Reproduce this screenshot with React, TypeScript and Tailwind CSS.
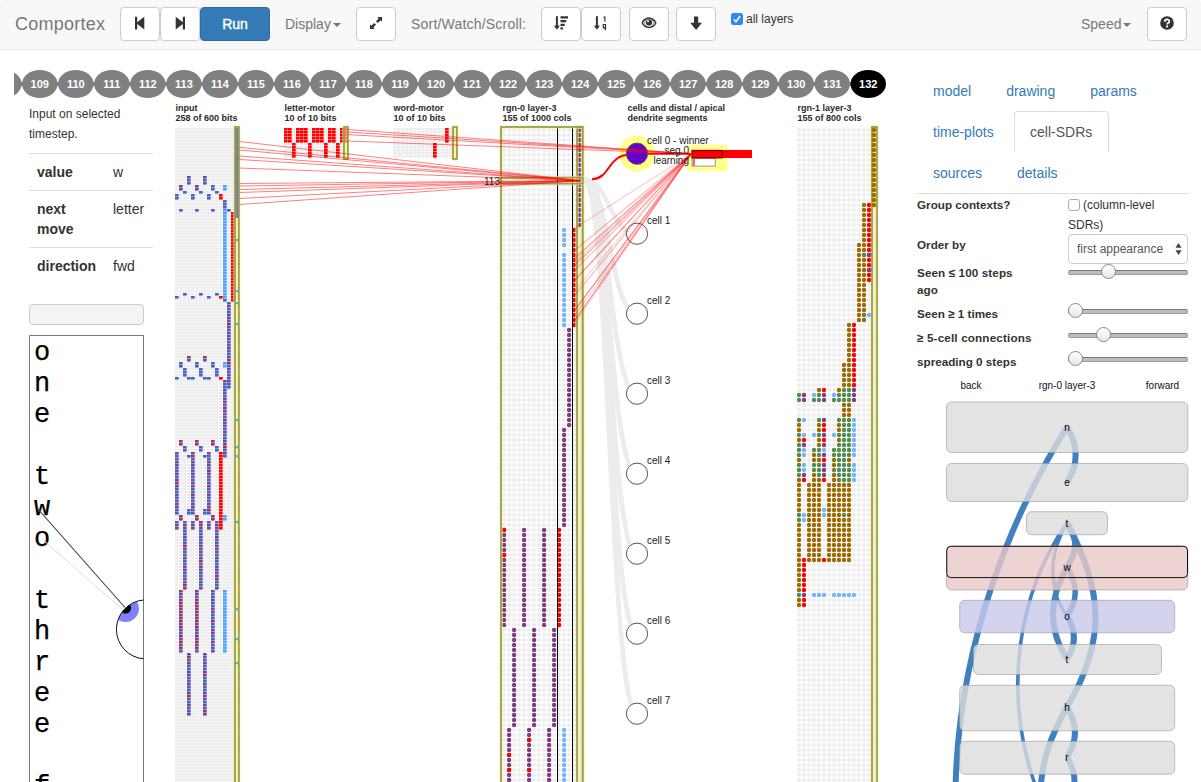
import React from "react";

const DOT = { P: "#823d80", B: "#a06a00", G: "#4f8e4f", L: "#77b5fb", R: "#ff0000" } as const;
const BIT = { r: "#ff0000", l: "#4da3ff", b: "#4a62c4", p: "#7a4598", m: "#a03068" } as const;
type DotKey = keyof typeof DOT;
type BitKey = keyof typeof BIT;

const range = (a: number, b: number) => Array.from({ length: b - a + 1 }, (_, i) => a + i);

/* ---------- input bits: [columns, first row, last row, colour] ---------- */
type Run = [number[], number, number, BitKey | "x"];
const inputRuns: Run[] = [
  [[3, 7], 16, 16, "p"], [[3, 7], 17, 18, "b"], [[1, 5], 19, 20, "p"], [[9], 19, 20, "b"], [[12], 19, 20, "l"],
  [[2, 6, 10], 21, 21, "b"], [[0, 4, 8], 22, 23, "b"], [[11], 22, 23, "r"],
  [[12], 24, 26, "b"], [[1, 5, 9, 13], 27, 27, "b"], [[12], 27, 56, "l"], [[12], 57, 57, "b"], [[14], 28, 57, "r"],
  [[2, 6, 10], 55, 55, "b"], [[0, 4, 8], 56, 56, "b"], [[11], 56, 56, "r"],
  [[13], 58, 86, "x"], [[12], 84, 109, "x"],
  [[3, 7], 76, 76, "m"], [[3, 7], 77, 77, "b"], [[1, 5, 9], 78, 79, "x"], [[12], 78, 79, "l"],
  [[2, 6, 10], 80, 82, "b"], [[0, 3, 4, 7, 8], 83, 83, "b"], [[11], 83, 83, "r"],
  [[1, 5, 9], 104, 105, "m"], [[2, 6, 10], 106, 107, "x"], [[0, 4, 8], 108, 128, "x"], [[11], 108, 133, "r"],
  [[3, 7], 109, 109, "b"], [[3, 7], 127, 128, "b"], [[1, 5, 9], 129, 130, "m"], [[12], 129, 130, "l"],
  [[0, 4, 8], 131, 133, "x"], [[2, 6, 10], 131, 153, "x"],
  [[1, 5], 154, 174, "m"], [[9], 154, 174, "x"], [[12], 154, 174, "l"], [[3, 7], 175, 195, "x"],
];

const shade = (k: BitKey | "x", row: number, col: number) => {
  if (k === "x") return (row * 7 + col) % 13 === 0 ? BIT.m : (row * 5) % 7 < 3 ? BIT.p : BIT.b;
  if (k === "m" && row > 153) return (row * 3) % 5 < 2 ? BIT.p : (row * 7) % 6 === 0 ? BIT.b : BIT.m;
  return BIT[k];
};

function Bits({ x, rows, id }: { x: number; rows: number; id: string }) {
  return (
    <>
      <pattern id={id} x={x} y={128} width={4} height={3} patternUnits="userSpaceOnUse">
        <rect width={3.5} height={2.5} fill="#ececec" />
      </pattern>
      <rect x={x} y={128} width={60} height={rows * 3} fill={`url(#${id})`} />
    </>
  );
}

function Bit({ x, c, r, fill }: { x: number; c: number; r: number; fill: string }) {
  return <rect x={x + c * 4} y={128 + r * 3} width={3.7} height={2.6} fill={fill} />;
}

function DotField({ x, id }: { x: number; id: string }) {
  return (
    <>
      <pattern id={id} x={x - 2.5} y={127.5} width={5} height={5} patternUnits="userSpaceOnUse">
        <circle cx={2.5} cy={2.5} r={2.05} fill="#ececec" />
      </pattern>
      <rect x={x - 2.5} y={127.5} width={80} height={660} fill={`url(#${id})`} />
    </>
  );
}

function Dot({ x, c, r, k }: { x: number; c: number; r: number; k: DotKey }) {
  return <circle cx={x + c * 5} cy={130 + r * 5} r={2.2} fill={DOT[k]} />;
}

/* ---------- rgn-0 columns ---------- */
type DotRun = [number[], number, number, DotKey];
const rgn0: DotRun[] = [
  [[15], 0, 19, "P"], [[12], 20, 23, "L"], [[12], 25, 39, "L"], [[14], 20, 39, "R"], [[13], 40, 59, "P"],
  [[12], 60, 79, "P"], [[0, 4, 8], 80, 99, "P"], [[0], 80, 80, "R"], [[0], 85, 85, "R"], [[11], 80, 99, "R"],
  [[2, 6, 10], 100, 119, "P"], [[1, 5, 9], 120, 131, "P"], [[12], 120, 131, "L"],
  [[1], 125, 125, "R"], [[1], 128, 128, "R"], [[5], 122, 122, "R"], [[5], 128, 128, "R"],
];

/* ---------- rgn-1 columns ---------- */
const rgn1: DotRun[] = [
  [[15], 0, 15, "B"], [[13], 15, 38, "B"], [[14], 15, 30, "R"], [[13], 25, 25, "G"], [[14], 25, 25, "P"],
  [[14], 28, 28, "P"], [[13], 37, 37, "G"], [[14], 37, 37, "L"], [[12], 23, 38, "B"],
  [[10], 39, 51, "B"], [[11], 39, 51, "R"], [[9], 47, 51, "B"],
];
const rgn1Rows = [
  "....BR..BGGP", "GP.LGP.LGGGP", "GP.GGP.GGGGP", ".........BB.", ".........BB.", ".........BB.",
  "GL..GP..GGGL", "B...BR..BGGL", "B...BR..BGGL", "GL.LGP.LGGGL", "BR..BR..BGGL", "GP..BP..GGGL",
  "GL.GGL.GGGGL", "GL.BGP.GGGGL", "B..BBR.BGGB.", "GL.GGP.BGGGL", "GL.GGP.GGGGL", "GP.BGP.BGGGL", "BR.BBR.BGGGL",
  "B.BBB.BBBBB.", "B.BBB.BBBBB.", "B.BBB.BBBBB.", "B.BBB.BBBBB.", "B.BBB.BBBBB.", "B.BBBLBBBBB.",
  "GLBBBLBBBGB.", "GLBBB.BBBBB.", "B.BBB.BBBBB.", "B.BBB.BBBBB.", "B.BBB.BBBBB.", "B.BBB.BBBBB.",
  "B.BBB.BBBBB.", "B.BBB.BBBBB.", "B.BBB.BBBBB.", "BRBBBRBBBBB.",
  "BR..........", "BR..........", "BR..........", "BR..........", "BR..........", "BR..........",
  "GP.LLL.LLLLL", "BR..........", "BR..........",
];

function Highlight({ x, y = 127, w, h }: { x: number; y?: number; w: number; h: number }) {
  return (
    <>
      <rect x={x} y={y} width={w} height={h} fill="none" stroke="#f4f4a0" strokeOpacity={0.6} strokeWidth={3.6} />
      <rect x={x} y={y} width={w} height={h} fill="none" stroke="#92923f" strokeOpacity={0.88} strokeWidth={1.8} />
    </>
  );
}

const headings: [number, string, string][] = [
  [175.5, "input", "258 of 600 bits"],
  [284.5, "letter-motor", "10 of 10 bits"],
  [393.5, "word-motor", "10 of 10 bits"],
  [502.5, "rgn-0 layer-3", "155 of 1000 cols"],
  [627.5, "cells and distal / apical", "dendrite segments"],
  [797.5, "rgn-1 layer-3", "155 of 800 cols"],
];

function Viz() {
  return (
    <svg className="block h-[682px] w-[740px] shrink-0" viewBox="160 100 740 682" fontFamily="'Liberation Sans', Arial, sans-serif">
      {headings.map(([x, a, b]) => (
        <g key={x} fontSize={9} fontWeight={700} fill="#2a2a2a">
          <text x={x} y={111}>{a}</text>
          <text x={x} y={121}>{b}</text>
        </g>
      ))}

      <Bits x={175} rows={220} id="bits-input" />
      {inputRuns.flatMap(([cols, a, b, k], i) =>
        cols.flatMap((c) => range(a, b).map((r) => <Bit key={`${i}-${c}-${r}`} x={175} c={c} r={r} fill={shade(k, r, c)} />))
      )}
      <rect x={235} y={127} width={4} height={660} fill="#f3f3c2" />
      <Highlight x={235} w={3.9} h={670} />
      <rect x={235.5} y={128} width={3} height={90} fill="#8c8c80" />
      {range(0, 29).map((r) => <rect key={r} x={235.6} y={128.4 + r * 3} width={2.8} height={2} fill="#74859a" />)}
      {[240, 291, 303, 324, 420, 447, 456, 522, 609, 639, 663].map((y) => (
        <rect key={y} x={235.2} y={y - 1} width={3.6} height={2.3} fill="#62b3ae" />
      ))}

      <Bits x={284} rows={10} id="bits-letter" />
      {[0, 1, 3, 4, 5, 7, 8, 9, 11, 12, 14, 15].flatMap((c) => range(0, 4).map((r) => <Bit key={`${c}-${r}`} x={284} c={c} r={r} fill="#f00" />))}
      {[2, 6, 10, 13].flatMap((c) => range(5, 9).map((r) => <Bit key={`${c}-${r}`} x={284} c={c} r={r} fill="#f00" />))}
      <rect x={344} y={143} width={4} height={16} fill="#f3f3c2" />
      <Highlight x={344} w={3.9} h={32} />

      <Bits x={393} rows={10} id="bits-word" />
      {range(0, 4).map((r) => <Bit key={r} x={393} c={13} r={r} fill="#f00" />)}
      {range(5, 9).map((r) => <Bit key={r} x={393} c={10} r={r} fill="#f00" />)}
      <rect x={453} y={127} width={4} height={32} fill="#f3f3c2" />
      <Highlight x={453} w={3.9} h={32} />

      <DotField x={504} id="dots-a" />
      <rect x={577} y={127} width={6} height={660} fill="#f3f3c2" />
      {range(0, 131).map((r) => <circle key={r} cx={579.3} cy={130 + r * 5} r={1.9} fill="#ececdf" />)}
      {rgn0.flatMap(([cols, a, b, k], i) =>
        cols.flatMap((c) => range(a, b).map((r) => <Dot key={`${i}-${c}-${r}`} x={504.1} c={c} r={r} k={k} />))
      )}
      <path d="M557.5 127V782M572.5 127V782" stroke="#000" strokeWidth={1} />
      <Highlight x={577} w={5.7} h={670} />
      <Highlight x={501} w={81.7} h={670} />
      <Highlight x={501} y={177.6} w={81.7} h={6} />

      <DotField x={799} id="dots-b" />
      <rect x={872} y={127} width={5} height={660} fill="#f3f3c2" />
      <Highlight x={872} w={5} h={670} />
      {rgn1.flatMap(([cols, a, b, k], i) =>
        cols.flatMap((c) => range(a, b).map((r) => <Dot key={`${i}-${c}-${r}`} x={799} c={c} r={r} k={k} />))
      )}
      {rgn1Rows.flatMap((line, i) =>
        line.split("").map((ch, c) => (ch === "." ? null : <Dot key={`${i}-${c}`} x={799} c={c} r={52 + i} k={ch as DotKey} />))
      )}
      {range(16, 131).map((r) => <circle key={r} cx={874.5} cy={130 + r * 5} r={1.6} fill="#ececdf" />)}

      {range(1, 7).map((k) => (
        <path key={k} d={`M584 180C609.5 180 609.5 ${153.7 + 80 * k} 637 ${153.7 + 80 * k}`} fill="none" stroke="#ececec" strokeWidth={4.8} />
      ))}
      <circle cx={637} cy={153.7} r={18} fill="#ffff8c" />
      <path d="M592 179.3C611 178 607 155.5 630 154.5" fill="none" stroke="#f00" strokeWidth={2} />
      <rect x={687} y={145} width={40.3} height={26.3} fill="#ffff8c" />
      {range(0, 7).map((k) => (
        <circle key={k} cx={637} cy={153.7 + 80 * k} r={10.6} fill={k === 0 ? "#6600cc" : "#fff"} stroke="#555" strokeWidth={1} />
      ))}
      <path d="M648 153.7H690" stroke="#f00" strokeWidth={2} />
      <rect x={722} y={150} width={30} height={8} fill="#f00" />
      <rect x={692} y={158.5} width={23.3} height={7.6} fill="#fff" stroke="#999" />
      <rect x={692.5} y={159} width={2.5} height={7} fill="#e57373" />
      <rect x={692} y={150.5} width={30.3} height={7.3} fill="#f00" stroke="#8a0000" strokeWidth={1.3} />

      <g stroke="#f00" fill="none">
        {[141.5, 147.3, 150, 156, 159.5, 168, 183.5, 186, 189.5, 192.5, 198.5, 204.5].map((y) => (
          <path key={y} d={`M239.5 ${y}L580 180.7`} strokeOpacity={0.5} strokeWidth={1} />
        ))}
        {[129.5, 132, 134.6, 141].map((y) => (
          <path key={y} d={`M347.5 ${y}L691 153.7`} strokeOpacity={0.5} strokeWidth={1} />
        ))}
        {([[228, 0.2], [250, 0.28], [258, 0.42], [262, 0.22], [265, 0.36], [270, 0.28], [280, 0.5], [290, 0.2], [295, 0.3], [310, 0.55], [315, 0.22], [320, 0.5], [323, 0.22]] as const).map(([y, o]) => (
          <path key={y} d={`M575 ${y}L691 154`} strokeOpacity={o} strokeWidth={1.1} />
        ))}
      </g>

      <g fontSize={10} fill="#222">
        <text x={647} y={144}>cell 0 - winner</text>
        {range(1, 7).map((k) => <text key={k} x={647} y={144 + 80 * k}>cell {k}</text>)}
        <text x={689} y={154} textAnchor="end">seg 0</text>
        <text x={689} y={164} textAnchor="end">learning</text>
        <text x={500} y={184.5} textAnchor="end">113</text>
      </g>
    </svg>
  );
}

function Timeline() {
  return (
    <svg className="block h-[32px] w-[876px]" viewBox="14 68 876 32" fontFamily="'Liberation Sans', Arial, sans-serif">
      <path d="M14 84H868" stroke="#808080" strokeWidth={4} />
      {range(108, 132).map((n) => {
        const x = 39.8 + (n - 109) * 36.02;
        return (
          <g key={n}>
            <ellipse cx={x} cy={84} rx={17.7} ry={14} fill={n === 132 ? "#000" : "#808080"} />
            {n > 108 && <text x={x} y={88} textAnchor="middle" fontSize={11} fontWeight={700} fill="#fff">{n}</text>}
          </g>
        );
      })}
    </svg>
  );
}

const glyphs: [string, number][] = [
  ["o", 0], ["n", 1], ["e", 2], ["t", 4], ["w", 5], ["o", 6],
  ["t", 8], ["h", 9], ["r", 10], ["e", 11], ["e", 12], ["f", 14],
];

function World() {
  return (
    <svg className="mt-[10px] block h-[447px] w-[116px]" viewBox="29 335 116 447">
      <path d="M29.5 790V335.5H143.5V790" fill="none" stroke="#777" />
      {glyphs.map(([ch, i]) => (
        <text key={i} x={42.2} y={360.3 + 31 * i} textAnchor="middle" fontSize={27} fontFamily="'Liberation Mono', 'Courier New', monospace" fill="#000" stroke="#000" strokeWidth={0.25}>{ch}</text>
      ))}
      <path d="M42 539L123 610" stroke="#ddd" />
      <path d="M37 508L125 607.5" stroke="#444" strokeWidth={1.1} />
      <clipPath id="eye"><path d="M143.5 600A29.5 29.5 0 0 0 143.5 658.800Z" /></clipPath>
      <g clipPath="url(#eye)">
        <circle cx={125.5} cy={608.5} r={13.5} fill="#8080ff" />
        <circle cx={125.5} cy={608} r={5.6} fill="#000" />
      </g>
      <path d="M143.5 600A29.5 29.5 0 0 0 143.5 658.800" fill="none" stroke="#111" />
    </svg>
  );
}

const boxes: [string, number, number, number, number, string, number][] = [
  ["n", 946.5, 402, 241.3, 50.5, "#dcdcdc", 430.5],
  ["e", 946.5, 463.5, 241.3, 38, "#dcdcdc", 485.5],
  ["t", 1026.5, 511.7, 81, 23, "#dcdcdc", 527],
  ["w", 946.5, 546, 241.3, 44, "#eac8c8", 571],
  ["o", 959.7, 600.3, 215, 32.5, "#c8c8ea", 620],
  ["t", 973.5, 644.5, 188, 30, "#dcdcdc", 662.5],
  ["h", 959.7, 685.3, 215, 45.5, "#dcdcdc", 710.5],
  ["r", 959.7, 741.3, 215, 33, "#dcdcdc", 760.5],
];

function Sdrs() {
  return (
    <svg className="block h-[406px] w-[272px]" viewBox="917 376 272 406" fontFamily="'Liberation Sans', Arial, sans-serif">
      <g fontSize={10} fill="#111" textAnchor="middle">
        <text x={971} y={389}>back</text>
        <text x={1067} y={389}>rgn-0 layer-3</text>
        <text x={1162.5} y={389}>forward</text>
      </g>
      <g fill="none" stroke="#4180c0" strokeWidth={6}>
        <path d="M1067 427C1015 510 958 640 955.5 790" />
        <path d="M1067 427C1078.500 445 1078.500 465 1067 482" />
        <path d="M1067 523C1020 590 1000 690 1037 790" strokeWidth={3.6} />
        <path d="M1067 523C1048 555 1048 590 1067 616" strokeWidth={3} />
        <path d="M1067 523C1046 560 1054 580 1056 590" strokeWidth={3} />
        <path d="M1067 523C1078 540 1078 550 1067 567" />
        <path d="M1067 523C1103 590 1107 640 1067 707" />
        <path d="M1067 567C1048 600 1048 630 1067 659" />
        <path d="M1067 567C1078 585 1078 600 1067 616" strokeWidth={5.500} />
        <path d="M1067 616C1076 630 1076 645 1067 659" />
        <path d="M1067 707C1050 738 1041 760 1040 800" />
        <path d="M1067 707C1078 725 1077 742 1067 757" />
        <path d="M1067 757C1078 775 1076 790 1067 810" />
      </g>
      {boxes.map(([ch, x, y, w, h, fill, ty]) => (
        <g key={y}>
          <rect x={x} y={y} width={w} height={h} rx={5} fill={fill} fillOpacity={0.8} stroke="#999" strokeOpacity={0.6} />
          {ch === "w" && <rect x={946.8} y={546.3} width={240.7} height={31.3} rx={4} fill="none" stroke="#111" />}
          <text x={1067} y={ty} fontSize={10} textAnchor="middle" fill="#000">{ch}</text>
        </g>
      ))}
    </svg>
  );
}

function Btn({ children, className = "" }: { children: React.ReactNode; className?: string }) {
  return (
    <button className={`flex h-[34px] w-[40px] shrink-0 items-center justify-center rounded border border-[#ccc] bg-white text-[#333] ${className}`}>
      <svg width={16} height={16} viewBox="0 0 16 16" fill="currentColor" className="-mt-[2px]">{children}</svg>
    </button>
  );
}

const DownArrow = () => <path d="M2.900 1.300h2v9.400h2L3.900 14.700.9 10.700h2z" />;

function Caret() {
  return <span className="ml-[2px] inline-block border-x-4 border-t-4 border-x-transparent border-t-[#777] align-middle" />;
}

function Header() {
  return (
    <header className="flex h-[50px] shrink-0 rounded-t border-b border-[#e7e7e7] bg-[#f8f8f8] pt-[7px] pl-[15px] text-[14px] text-[#777]">
      <span className="w-[105px] text-[18px] leading-[34px] tracking-[0.25px]">Comportex</span>
      <Btn><path d="M3 1.800h2.200v5.500L12.300 1.800v12.600L5.200 8.900v5.500H3z" /></Btn>
      <Btn><path d="M13 1.800h-2.200v5.500L3.700 1.800v12.600l7.100-5.500v5.500H13z" /></Btn>
      <button className="h-[34px] w-[70px] rounded border border-[#2e6da4] bg-[#337ab7] text-[14px] text-white [-webkit-text-stroke:0.4px_white]">Run</button>
      <span className="ml-[15px] w-[71px] leading-[34px]">Display<Caret /></span>
      <Btn><path d="M9.300 1.300h5.400v5.400l-1.700-1.700-3 3L8 6l3-3zM1.300 14.700V9.300L3 11l3-3 2 2-3 3 1.700 1.700z" transform="translate(.8 .8) scale(.9)" /></Btn>
      <span className="ml-[15px] w-[130px] leading-[34px] tracking-[0.2px]">Sort/Watch/Scroll:</span>
      <Btn><DownArrow /><path d="M7.500 1.300h7.500v2.200h-7.500zM7.500 5h5.700v2.200H7.500zM7.500 8.700h4.200v2.200H7.500zM7.500 12.300h2.400v2.200H7.500z" /></Btn>
      <Btn>
        <DownArrow />
        <path d="M10.500 1.500h2v5.200h-1.200v-4h-.8zM9.700 8.900h3.400v6.200h-1.500v-1.900H9.700zM10.900 10.100v1.900h1v-1.900z" fillRule="evenodd" />
      </Btn>
      <Btn className="ml-[8px]">
        <path d="M8 2.300C4.400 2.300 1.800 4.500.4 7.800 1.800 11.100 4.400 13.300 8 13.300s6.200-2.200 7.600-5.500C14.200 4.500 11.600 2.300 8 2.300zm-3.600 2.900a5 5 0 0 0 .2 5.700A7 7 0 0 1 2 7.800a7 7 0 0 1 2.400-2.600zm7.200 0A7 7 0 0 1 14 7.800a7 7 0 0 1-2.600 3.100 5 5 0 0 0 .2-5.700zM8 3.700a4 4 0 1 1 0 8 4 4 0 0 1 0-8z" fillRule="evenodd" />
        <circle cx={8} cy={7.400} r={3.100} /><circle cx={7} cy={6.300} r={1} fill="#fff" />
      </Btn>
      <Btn className="ml-[7px]"><path d="M6 1.500h4.200V7.700h3.800L8.100 15 2.200 7.700H6z" /></Btn>
      <label className="ml-[15px] flex h-[24px] items-center text-[12px] text-[#333]">
        <span className="mr-[3px] flex h-[12px] w-[12px] items-center justify-center rounded-[2.5px] bg-[#2f87f5]">
          <svg width={10} height={10} viewBox="0 0 10 10"><path d="M1.800 5.300L4 7.700 8.200 2" fill="none" stroke="#fff" strokeWidth={1.500} /></svg>
        </span>
        all layers
      </label>
      <span className="ml-auto w-[66px] leading-[34px]">Speed<Caret /></span>
      <Btn className="mr-[14px]">
        <circle cx={8} cy={8} r={6.800} />
        <path d="M5.800 6.700C5.800 3.600 10.300 3.800 10.300 6.400 10.300 8 8.100 8 8.100 9.600" fill="none" stroke="#fff" strokeWidth={1.800} />
        <rect x={7.100} y={10.500} width={2} height={1.900} fill="#fff" />
      </Btn>
    </header>
  );
}

function Slider({ left, className = "" }: { left: number; className?: string }) {
  return (
    <div className={`flex h-[16px] w-[120px] items-center ${className}`}>
      <div className="relative h-[5px] w-full rounded-[3px] border border-[#999] border-t-[#777] bg-[#bdbdbd]">
        <span className="absolute -top-[6.500px] h-[15px] w-[15px] rounded-full border border-[#888] bg-gradient-to-b from-white to-[#e8e8e8]" style={{ left }} />
      </div>
    </div>
  );
}

const tab = "block h-[41px] px-[16px] leading-[43px]";

function Panel() {
  return (
    <aside className="flex w-[272px] shrink-0 flex-col pt-[20px]">
      <nav className="flex h-[124px] flex-col border-b border-[#ddd] text-[14px] text-[#337ab7]">
        <div className="flex"><a className={tab}>model</a><a className={`${tab} ml-[3px]`}>drawing</a><a className={`${tab} ml-[3px]`}>params</a></div>
        <div className="flex">
          <a className={tab}>time-plots</a>
          <a className="ml-[4px] block h-[41px] w-[95px] rounded-t border border-b-0 border-[#ddd] text-center leading-[41px] text-[#555]">cell-SDRs</a>
        </div>
        <div className="flex"><a className={tab}>sources</a><a className={`${tab} ml-[3px]`}>details</a></div>
      </nav>
      <div className="flex h-[182px] text-[12px] text-[#333]">
        <div className="w-[151px] pt-[1px] text-[11.700px] font-bold">
          <p className="h-[40px] leading-[20px]">Group contexts?</p>
          <p className="h-[29px] leading-[20px]">Order by</p>
          <p className="h-[39px] w-[110px] leading-[17px] tracking-[0.1px]">Seen ≤ 100 steps ago</p>
          <p className="h-[24px] leading-[21px]">Seen ≥ 1 times</p>
          <p className="h-[24px] leading-[21px] tracking-[0.15px]">≥ 5-cell connections</p>
          <p className="h-[24px] leading-[21px]">spreading 0 steps</p>
        </div>
        <div className="w-[121px]">
          <div className="h-[40px] pt-[1px] leading-[20px]">
            <span className="mr-[3px] inline-block h-[12px] w-[12px] rounded-[3px] border border-[#aaa] bg-white align-[-2px]" />(column-level<br />SDRs)
          </div>
          <div className="flex h-[30px] w-[120px] items-center justify-between rounded border border-[#ccc] pr-[5px] pl-[8px] text-[12px] text-[#555]">
            first appearance
            <svg width={7} height={12} viewBox="0 0 7 12" fill="#444"><path d="M3.500 0L6.500 4.700H.5zM3.500 12L.5 7.300h6z" /></svg>
          </div>
          <Slider left={32} />
          <Slider left={-1} className="mt-[23px]" />
          <Slider left={27} className="mt-[8px]" />
          <Slider left={-1} className="mt-[8px]" />
        </div>
      </div>
      <Sdrs />
    </aside>
  );
}

export default function App() {
  return (
    <div className="flex h-[782px] w-[1201px] flex-col overflow-hidden bg-white font-['Liberation_Sans',Arial,sans-serif]">
      <Header />
      <div className="flex min-h-0 flex-1">
        <main className="flex w-[917px] shrink-0 flex-col pt-[18px]">
          <div className="pl-[14px]"><Timeline /></div>
          <div className="flex">
            <div className="w-[160px] shrink-0 pt-[4px] pl-[29px] text-[#333]">
              <p className="h-[49px] text-[12px] leading-[20px]">Input on selected<br />timestep.</p>
              <dl className="w-[124px] text-[14px] leading-[20px]">
                <div className="flex h-[37px] border-t border-[#ddd] px-2 pt-[8px]"><dt className="w-[76px] font-bold">value</dt><dd>w</dd></div>
                <div className="flex h-[57px] border-t border-[#ddd] px-2 pt-[8px]"><dt className="w-[76px] pr-4 font-bold">next move</dt><dd>letter</dd></div>
                <div className="flex h-[57px] border-t border-[#ddd] px-2 pt-[8px]"><dt className="w-[76px] font-bold">direction</dt><dd>fwd</dd></div>
              </dl>
              <div className="h-[21px] w-[115px] rounded border border-[#ccc] bg-[#f4f4f4]" />
              <World />
            </div>
            <Viz />
          </div>
        </main>
        <Panel />
      </div>
    </div>
  );
}
